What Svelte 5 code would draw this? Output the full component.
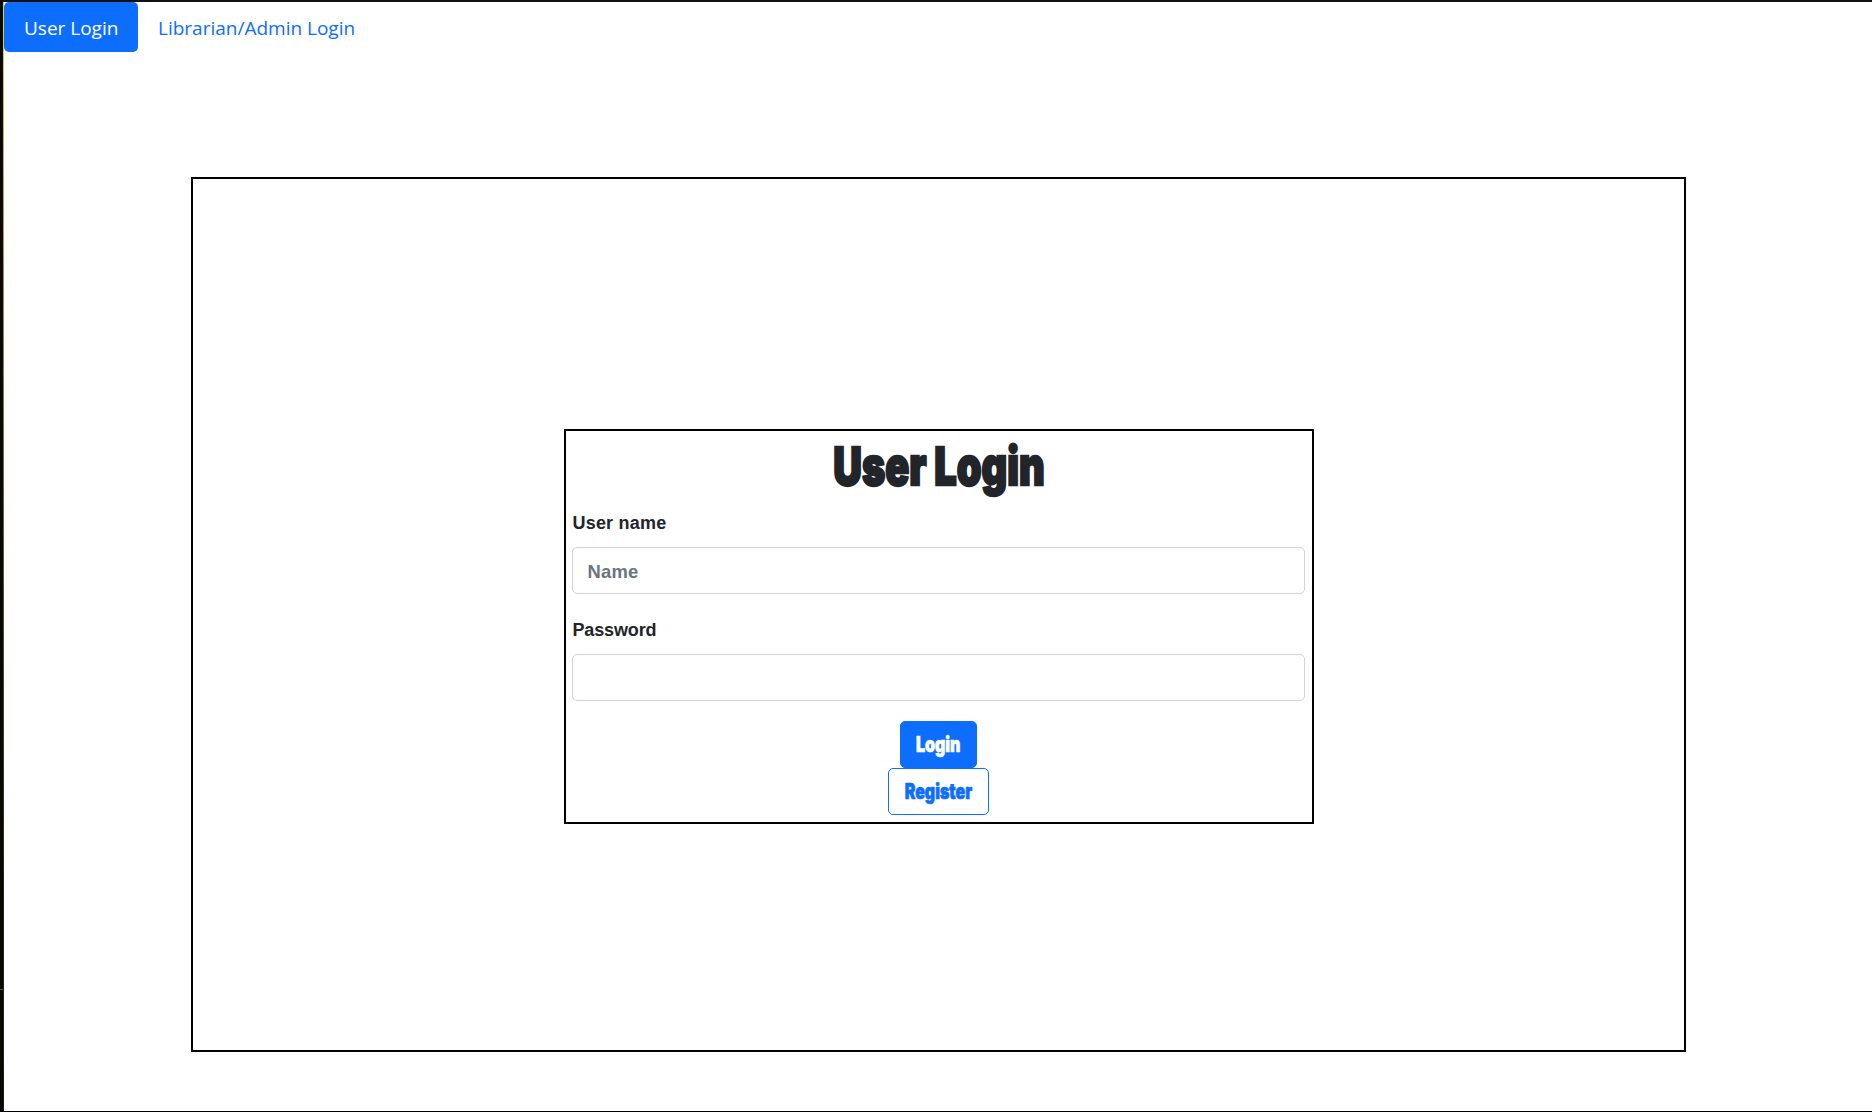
<script>
  let activeTab = $state('user');
  let name = $state('');
  let password = $state('');
</script>

<div class="page">
  <nav class="tabs">
    <button class="tab" class:active={activeTab === 'user'} onclick={() => (activeTab = 'user')}><span>User Login</span></button>
    <button class="tab" class:active={activeTab === 'admin'} onclick={() => (activeTab = 'admin')}><span>Librarian/Admin Login</span></button>
  </nav>

  <main class="outer">
    <form class="card" onsubmit={(e) => e.preventDefault()}>
      <h1><span>User Login</span></h1>
      <label class="name-label" for="name">User name</label>
      <input id="name" type="text" placeholder="Name" bind:value={name} />
      <label class="password-label" for="password">Password</label>
      <input id="password" type="password" bind:value={password} />
      <button class="btn login" type="submit"><span>Login</span></button>
      <button class="btn register" type="button"><span>Register</span></button>
    </form>
  </main>
</div>

<style>
  :global(body) {
    margin: 0;
    background: #fff;
  }

  .page,
  .page * {
    box-sizing: border-box;
  }

  .page {
    width: 1872px;
    height: 1112px;
    overflow: hidden;
    display: flex;
    flex-direction: column;
    border-top: 2px solid #111;
    border-bottom: 1px solid #000;
    background: linear-gradient(#555, #555) 0 987px / 3px 1px no-repeat,
      linear-gradient(to right, #080803 3px, transparent 3px) no-repeat,
      linear-gradient(to bottom, #e8d820 0, #77700f 450px, #262408 900px, #1c1a08 100%) 3px 0 / 1px 100% no-repeat,
      #fff;
    padding-left: 4px;
  }

  .tabs {
    display: flex;
    height: 50px;
    flex: none;
  }

  .tab {
    border: 0;
    padding: 2px 20px 0;
    border-radius: 5px;
    background: transparent;
    color: #0d6efd;
    font: 400 19px/48px 'Open Sans', 'Noto Sans', sans-serif;
    white-space: nowrap;
  }

  .tab:first-child {
    width: 134px;
  }

  .tab.active {
    background: #0d6efd;
    color: #fff;
  }

  .tab span {
    display: block;
  }

  .outer {
    width: 1495px;
    height: 875px;
    margin: 125px 0 0 187px;
    border: 2px solid #000;
    display: flex;
    justify-content: center;
    align-items: flex-start;
    padding-top: 250px;
  }

  .card {
    width: 750px;
    height: 395px;
    border: 2px solid #000;
    padding: 0 7px 7px 6px;
    display: flex;
    flex-direction: column;
    align-items: center;
    font-family: 'Liberation Sans', sans-serif;
  }

  h1 {
    margin: 0;
    padding: 2px 0 0 1px;
    height: 77px;
    font: 900 52.5px/66px Inter, Roboto, sans-serif;
    color: #212529;
    white-space: nowrap;
  }

  h1 span,
  .btn span {
    display: block;
    transform: scaleX(0.755);
    -webkit-text-stroke: 2.4px currentColor;
  }

  label {
    align-self: stretch;
    padding-left: 1px;
    height: 39px;
    line-height: 30px;
    font-size: 18px;
    font-weight: 700;
    color: #212529;
  }

  .name-label {
    letter-spacing: 0.2px;
  }

  .password-label {
    letter-spacing: -0.15px;
  }

  input {
    width: 733px;
    height: 47px;
    margin: 0 0 21px;
    padding: 3px 15px 0;
    border: 1px solid #ced4da;
    border-radius: 5px;
    background: #fff;
    color: #212529;
    font: 700 18.4px 'Liberation Sans', sans-serif;
    letter-spacing: 0.2px;
    outline: none;
  }

  #password {
    margin-bottom: 20px;
  }

  input::placeholder {
    color: #6c757d;
    opacity: 1;
  }

  .btn {
    height: 47px;
    flex: none;
    display: flex;
    justify-content: center;
    align-items: center;
    padding: 1px 0 0;
    border: 1px solid #0d6efd;
    border-radius: 5px;
    font: 900 21px/30px Inter, Roboto, sans-serif;
    white-space: nowrap;
  }

  .btn span {
    transform: scaleX(0.76);
    -webkit-text-stroke-width: 0.7px;
  }

  .login {
    width: 77px;
    padding-left: 1px;
    background: #0d6efd;
    color: #fff;
  }

  .register {
    width: 101px;
    padding-left: 1px;
    background: #fff;
    color: #0d6efd;
  }
</style>
